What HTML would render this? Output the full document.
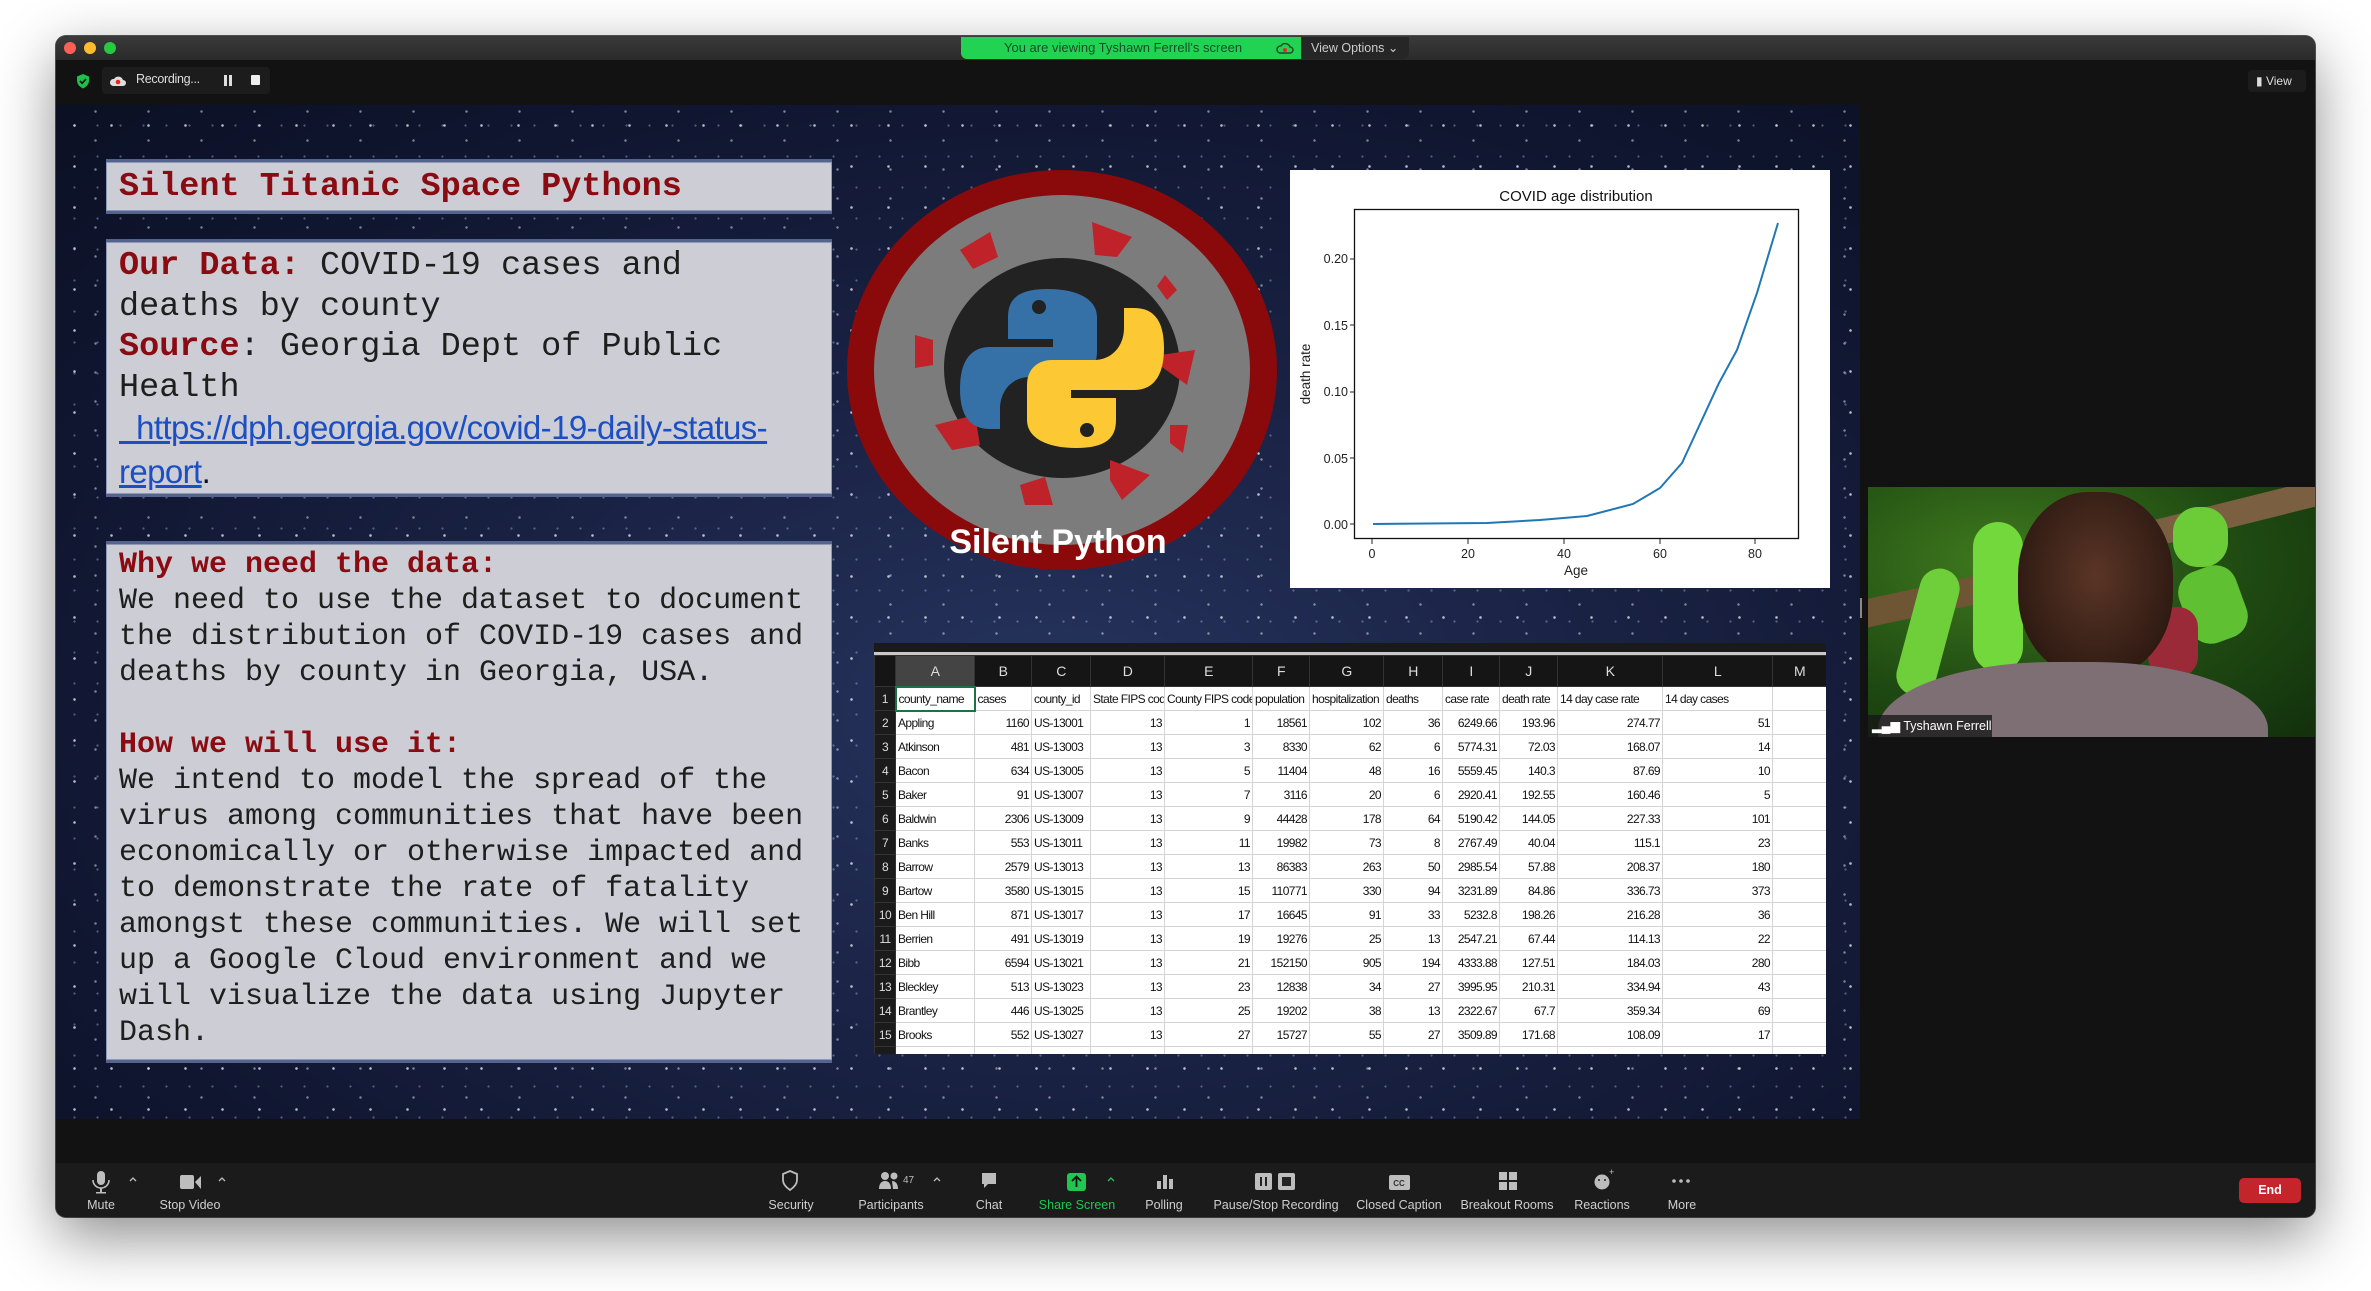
<!DOCTYPE html>
<html><head><meta charset="utf-8">
<style>
*{margin:0;padding:0;box-sizing:border-box}
body{width:2371px;height:1291px;background:#fff;position:relative;overflow:hidden;font-family:"Liberation Sans",sans-serif}
.abs{position:absolute}
#win{left:56px;top:36px;width:2259px;height:1181px;background:#121212;border-radius:10px;overflow:hidden;box-shadow:0 20px 60px rgba(0,0,0,.45),0 0 0 1px #555}
#slide{left:56px;top:105px;width:1804px;height:1014px;
background:
radial-gradient(circle,rgba(255,255,255,.7) 0 1px,transparent 1.6px) 0 0/37px 41px,
radial-gradient(circle,rgba(255,255,255,.45) 0 1px,transparent 1.5px) 13px 21px/53px 29px,
radial-gradient(circle,rgba(200,215,255,.35) 0 .8px,transparent 1.4px) 7px 5px/23px 31px,
radial-gradient(ellipse at 55% 60%,#26345e 0%,#1a2244 40%,#101630 75%,#0b1024 100%);}
.box{position:absolute;background:#cdced5;border-top:3px solid #55648f;border-bottom:3px solid #55648f;box-shadow:inset 0 0 0 1px #8d97b6}
.mono{font-family:"Liberation Mono",monospace;color:#1e1e1e}
.red{color:#8a0b12;font-weight:bold}
.tbl{position:absolute;left:874px;top:643px;width:952px;height:411px;background:#fff;overflow:hidden}
.tbl table{width:952px;border-collapse:collapse;table-layout:fixed;font-family:"Liberation Sans",sans-serif;font-size:12px;letter-spacing:-.6px;color:#111}
.tbl td{height:24px;border:1px solid #d4d4d4;padding:0 2px;white-space:nowrap;overflow:hidden;text-align:right}
.tbl td.l{text-align:left}
.tbl td.rn{background:#1b1b1b;color:#ddd;text-align:center;border-color:#333;padding:0}
.tbl tr.h td{background:#151515;color:#ddd;text-align:center;height:31px;border-color:#333;font-size:14px}
.lab{position:absolute;top:1198px;font-size:12.5px;color:#cfcfcf;transform:translateX(-50%);white-space:nowrap}
</style></head><body>
<div id="win" class="abs"></div>
<div class="abs" style="left:56px;top:36px;width:2259px;height:24px;background:linear-gradient(#3a3a3a,#2a2a2a);border-radius:10px 10px 0 0"></div>
<div class="abs" style="left:64px;top:42px;width:12px;height:12px;border-radius:50%;background:#fe5f57"></div>
<div class="abs" style="left:84px;top:42px;width:12px;height:12px;border-radius:50%;background:#febc2e"></div>
<div class="abs" style="left:104px;top:42px;width:12px;height:12px;border-radius:50%;background:#28c840"></div>
<div class="abs" style="left:961px;top:37px;width:340px;height:22px;background:#22d353;border-radius:0 0 0 6px;font-size:13px;color:#1d4a28;line-height:22px;padding-left:43px">You are viewing Tyshawn Ferrell's screen
<svg class="abs" style="left:315px;top:4px" width="18" height="14"><path d="M4 12h10a3 3 0 0 0 0-6a5 5 0 0 0-9-1a3.5 3.5 0 0 0-1 7z" fill="none" stroke="#1d4a28" stroke-width="1.4"/><circle cx="9" cy="9" r="2" fill="#e23"/></svg></div>
<div class="abs" style="left:1301px;top:37px;width:108px;height:22px;background:#262626;border-radius:0 0 6px 0;font-size:12.5px;color:#ccc;line-height:22px;padding-left:10px">View Options &#8964;</div>
<svg class="abs" style="left:76px;top:73px" width="14" height="16"><path d="M7 1l6 2.5v4c0 4-3 6.5-6 8c-3-1.5-6-4-6-8v-4z" fill="#1fbf4a"/><path d="M4 8l2.2 2.2L10 6" stroke="#111" stroke-width="1.6" fill="none"/></svg>
<div class="abs" style="left:102px;top:67px;width:168px;height:27px;background:#1c1c1c;border-radius:4px"></div>
<svg class="abs" style="left:110px;top:73px" width="16" height="14"><path d="M3 13h10a3 3 0 0 0 0-6a5 5 0 0 0-9-1a3.5 3.5 0 0 0-1 7z" fill="#ddd"/><circle cx="8" cy="9" r="2.3" fill="#e22"/></svg>
<div class="abs" style="left:136px;top:72px;font-size:12.5px;color:#ddd;letter-spacing:-.3px">Recording...</div>
<div class="abs" style="left:224px;top:75px;width:3px;height:11px;background:#ddd"></div>
<div class="abs" style="left:229px;top:75px;width:3px;height:11px;background:#ddd"></div>
<div class="abs" style="left:251px;top:75px;width:9px;height:10px;background:#eee;border-radius:1px"></div>
<div class="abs" style="left:2248px;top:70px;width:58px;height:22px;background:#1c1c1c;border-radius:4px;font-size:12px;color:#ddd;line-height:22px;padding-left:8px">&#9646; View</div>

<div id="slide" class="abs"></div>
<div class="box" style="left:106px;top:159px;width:726px;height:55px"></div>
<div class="abs mono red" style="left:119px;top:168px;font-size:33.5px;line-height:38px">Silent Titanic Space Pythons</div>
<div class="box" style="left:106px;top:239px;width:726px;height:258px"></div>
<div class="abs mono" style="left:119px;top:246px;font-size:33.5px;line-height:40.5px;white-space:pre"><span class="red">Our Data:</span> COVID-19 cases and
deaths by county
<span class="red">Source</span>: Georgia Dept of Public
Health
<span style="font-family:'Liberation Sans',sans-serif;color:#1c4fc4;text-decoration:underline;font-size:33px;letter-spacing:-.6px">  https://dph.georgia.gov/covid-19-daily-status-</span>
<span style="font-family:'Liberation Sans',sans-serif;color:#1c4fc4;font-size:33px;letter-spacing:-.6px"><u>report</u><span style="color:#111">.</span></span></div>
<div class="box" style="left:106px;top:541px;width:726px;height:522px"></div>
<div class="abs mono" style="left:119px;top:547px;font-size:30px;line-height:36px;white-space:pre"><span class="red">Why we need the data:</span>
We need to use the dataset to document
the distribution of COVID-19 cases and
deaths by county in Georgia, USA.

<span class="red">How we will use it:</span>
We intend to model the spread of the
virus among communities that have been
economically or otherwise impacted and
to demonstrate the rate of fatality
amongst these communities. We will set
up a Google Cloud environment and we
will visualize the data using Jupyter
Dash.</div>

<svg class="abs" style="left:0;top:0" width="2371" height="1291">
<ellipse cx="1062" cy="370" rx="215" ry="200" fill="#8a0a0c"/>
<ellipse cx="1062" cy="370" rx="188" ry="175" fill="#7c7c7c"/>
<ellipse cx="1062" cy="368" rx="118" ry="110" fill="#222"/>
<g fill="#c0222a">
<path d="M960 250l30-18l8 25l-25 12z"/><path d="M1092 222l40 15l-15 20l-22-2z"/>
<path d="M1165 275l12 15l-10 10l-10-14z"/><path d="M915 335l18 5l0 25l-18 3z"/>
<path d="M1160 355l35-5l-8 35l-25-18z"/><path d="M935 425l40-10l5 30l-28 5z"/>
<path d="M1170 425l18 0l-5 28l-13-10z"/><path d="M1110 460l40 15l-28 25l-12-20z"/>
<path d="M1020 485l25-8l8 28l-28 0z"/>
</g>
<path d="M1048 289c-30 0-40 10-40 28v22h45v8h-63c-20 0-30 15-30 42s10 40 30 40h10v-20c0-18 12-32 30-32h42c15 0 25-10 25-25v-35c0-18-20-28-49-28z" fill="#3570a7"/>
<circle cx="1039" cy="307" r="7" fill="#222"/>
<path d="M1076 448c30 0 40-10 40-28v-22h-45v-8h63c20 0 30-15 30-42s-10-40-30-40h-10v20c0 18-12 32-30 32h-42c-15 0-25 10-25 25v35c0 18 20 28 49 28z" fill="#fcc934"/>
<circle cx="1087" cy="430" r="7" fill="#222"/>
<text x="1058" y="553" text-anchor="middle" font-family="Liberation Sans Narrow,Liberation Sans,sans-serif" font-size="34" fill="#fff" font-weight="bold">Silent Python</text>

<rect x="1290" y="170" width="540" height="418" fill="#fff"/>
<rect x="1354.5" y="209.5" width="444" height="329" fill="none" stroke="#111" stroke-width="1.3"/>
<text x="1576" y="201" text-anchor="middle" font-size="15" fill="#111">COVID age distribution</text>
<g font-size="12.5" fill="#222" text-anchor="end">
<text x="1348" y="529">0.00</text><text x="1348" y="463">0.05</text><text x="1348" y="396">0.10</text><text x="1348" y="330">0.15</text><text x="1348" y="263">0.20</text></g>
<g stroke="#222"><line x1="1350" x2="1355" y1="524" y2="524"/><line x1="1350" x2="1355" y1="458" y2="458"/><line x1="1350" x2="1355" y1="392" y2="392"/><line x1="1350" x2="1355" y1="325" y2="325"/><line x1="1350" x2="1355" y1="259" y2="259"/>
<line y1="539" y2="544" x1="1372" x2="1372"/><line y1="539" y2="544" x1="1468" x2="1468"/><line y1="539" y2="544" x1="1564" x2="1564"/><line y1="539" y2="544" x1="1660" x2="1660"/><line y1="539" y2="544" x1="1755" x2="1755"/></g>
<g font-size="12.5" fill="#222" text-anchor="middle"><text x="1372" y="558">0</text><text x="1468" y="558">20</text><text x="1564" y="558">40</text><text x="1660" y="558">60</text><text x="1755" y="558">80</text>
<text x="1576" y="575" font-size="13.5">Age</text></g>
<text transform="translate(1310,374) rotate(-90)" text-anchor="middle" font-size="13.5" fill="#222">death rate</text>
<polyline fill="none" stroke="#1f77b4" stroke-width="2" points="1373,524 1487,523 1540,520 1587,516 1633,504 1660,488 1682,463 1719,383 1737,350 1757,293 1778,223"/>
</svg>

<div class="tbl">
<div style="height:12px;background:#1a1a1a;border-bottom:3px solid #c9c9c9"></div>
<table>
<colgroup><col style="width:21px"><col style="width:79px"><col style="width:57px"><col style="width:59px"><col style="width:74px"><col style="width:88px"><col style="width:57px"><col style="width:74px"><col style="width:59px"><col style="width:57px"><col style="width:58px"><col style="width:105px"><col style="width:110px"><col style="width:54px"></colgroup>
<tr class="h"><td></td><td style="background:#444">A</td><td>B</td><td>C</td><td>D</td><td>E</td><td>F</td><td>G</td><td>H</td><td>I</td><td>J</td><td>K</td><td>L</td><td>M</td></tr>
<tr><td class="rn">1</td><td class="l" style="border:2px solid #1e7145">county_name</td><td class="l">cases</td><td class="l">county_id</td><td class="l">State FIPS code</td><td class="l">County FIPS code</td><td class="l">population</td><td class="l">hospitalization</td><td class="l">deaths</td><td class="l">case rate</td><td class="l">death rate</td><td class="l">14 day case rate</td><td class="l">14 day cases</td><td></td></tr>
<tr><td class="rn">2</td><td class="l">Appling</td><td>1160</td><td class="l">US-13001</td><td>13</td><td>1</td><td>18561</td><td>102</td><td>36</td><td>6249.66</td><td>193.96</td><td>274.77</td><td>51</td><td></td></tr>
<tr><td class="rn">3</td><td class="l">Atkinson</td><td>481</td><td class="l">US-13003</td><td>13</td><td>3</td><td>8330</td><td>62</td><td>6</td><td>5774.31</td><td>72.03</td><td>168.07</td><td>14</td><td></td></tr>
<tr><td class="rn">4</td><td class="l">Bacon</td><td>634</td><td class="l">US-13005</td><td>13</td><td>5</td><td>11404</td><td>48</td><td>16</td><td>5559.45</td><td>140.3</td><td>87.69</td><td>10</td><td></td></tr>
<tr><td class="rn">5</td><td class="l">Baker</td><td>91</td><td class="l">US-13007</td><td>13</td><td>7</td><td>3116</td><td>20</td><td>6</td><td>2920.41</td><td>192.55</td><td>160.46</td><td>5</td><td></td></tr>
<tr><td class="rn">6</td><td class="l">Baldwin</td><td>2306</td><td class="l">US-13009</td><td>13</td><td>9</td><td>44428</td><td>178</td><td>64</td><td>5190.42</td><td>144.05</td><td>227.33</td><td>101</td><td></td></tr>
<tr><td class="rn">7</td><td class="l">Banks</td><td>553</td><td class="l">US-13011</td><td>13</td><td>11</td><td>19982</td><td>73</td><td>8</td><td>2767.49</td><td>40.04</td><td>115.1</td><td>23</td><td></td></tr>
<tr><td class="rn">8</td><td class="l">Barrow</td><td>2579</td><td class="l">US-13013</td><td>13</td><td>13</td><td>86383</td><td>263</td><td>50</td><td>2985.54</td><td>57.88</td><td>208.37</td><td>180</td><td></td></tr>
<tr><td class="rn">9</td><td class="l">Bartow</td><td>3580</td><td class="l">US-13015</td><td>13</td><td>15</td><td>110771</td><td>330</td><td>94</td><td>3231.89</td><td>84.86</td><td>336.73</td><td>373</td><td></td></tr>
<tr><td class="rn">10</td><td class="l">Ben Hill</td><td>871</td><td class="l">US-13017</td><td>13</td><td>17</td><td>16645</td><td>91</td><td>33</td><td>5232.8</td><td>198.26</td><td>216.28</td><td>36</td><td></td></tr>
<tr><td class="rn">11</td><td class="l">Berrien</td><td>491</td><td class="l">US-13019</td><td>13</td><td>19</td><td>19276</td><td>25</td><td>13</td><td>2547.21</td><td>67.44</td><td>114.13</td><td>22</td><td></td></tr>
<tr><td class="rn">12</td><td class="l">Bibb</td><td>6594</td><td class="l">US-13021</td><td>13</td><td>21</td><td>152150</td><td>905</td><td>194</td><td>4333.88</td><td>127.51</td><td>184.03</td><td>280</td><td></td></tr>
<tr><td class="rn">13</td><td class="l">Bleckley</td><td>513</td><td class="l">US-13023</td><td>13</td><td>23</td><td>12838</td><td>34</td><td>27</td><td>3995.95</td><td>210.31</td><td>334.94</td><td>43</td><td></td></tr>
<tr><td class="rn">14</td><td class="l">Brantley</td><td>446</td><td class="l">US-13025</td><td>13</td><td>25</td><td>19202</td><td>38</td><td>13</td><td>2322.67</td><td>67.7</td><td>359.34</td><td>69</td><td></td></tr>
<tr><td class="rn">15</td><td class="l">Brooks</td><td>552</td><td class="l">US-13027</td><td>13</td><td>27</td><td>15727</td><td>55</td><td>27</td><td>3509.89</td><td>171.68</td><td>108.09</td><td>17</td><td></td></tr>
<tr><td class="rn">16</td><td class="l">Bryan</td><td>1283</td><td class="l">US-13029</td><td>13</td><td>29</td><td>39627</td><td>88</td><td>14</td><td>3237.7</td><td>35.33</td><td>237.11</td><td>88</td><td></td></tr>
</table></div>

<div class="abs" style="left:1868px;top:487px;width:447px;height:250px;overflow:hidden;background:radial-gradient(ellipse at 30% 30%,#3f7a1e,#1f4a12 55%,#12300c)">
<div class="abs" style="left:-20px;top:95px;width:200px;height:28px;background:#6e5534;transform:rotate(-12deg);border-radius:14px"></div>
<div class="abs" style="left:250px;top:15px;width:220px;height:26px;background:#7a6040;transform:rotate(-14deg);border-radius:13px"></div>
<div class="abs" style="left:40px;top:80px;width:40px;height:130px;background:#6fcf3a;border-radius:20px;transform:rotate(15deg)"></div>
<div class="abs" style="left:105px;top:35px;width:50px;height:150px;background:#72d83c;border-radius:25px"></div>
<div class="abs" style="left:305px;top:20px;width:55px;height:60px;background:#6ccc38;border-radius:25px"></div>
<div class="abs" style="left:315px;top:80px;width:60px;height:75px;background:#5fc032;border-radius:22px;transform:rotate(-20deg)"></div>
<div class="abs" style="left:280px;top:120px;width:50px;height:70px;background:#9a2a38;border-radius:20px"></div>
<div class="abs" style="left:150px;top:5px;width:155px;height:185px;background:radial-gradient(ellipse at 50% 45%,#5a3526,#2e1a12 75%);border-radius:45%"></div>
<div class="abs" style="left:10px;top:175px;width:390px;height:150px;background:#7e6f74;border-radius:45% 45% 0 0"></div>
<div class="abs" style="left:0;top:228px;height:22px;width:124px;background:rgba(20,20,20,.75);color:#fff;font-size:12.5px;line-height:22px;padding-left:4px;white-space:nowrap">&#9602;&#9604;&#9606; Tyshawn Ferrell</div>
</div>
<div class="abs" style="left:1860px;top:598px;width:2px;height:20px;background:#888"></div>

<div class="abs" style="left:56px;top:1163px;width:2259px;height:54px;background:#1b1b1b;border-radius:0 0 10px 10px"></div>
<svg class="abs" style="left:0;top:1165px" width="2371" height="34">
<g fill="#bdbdbd">
<rect x="97" y="6" width="8" height="14" rx="4"/><path d="M93 15a8 8 0 0 0 16 0" fill="none" stroke="#bdbdbd" stroke-width="1.6"/><rect x="100" y="23" width="2" height="4"/><rect x="96" y="27" width="10" height="1.5"/>
<rect x="180" y="10" width="14" height="14" rx="2"/><path d="M195 17l6-6v13z"/>
<path d="M790 6l7 3v6c0 5-4 8-7 10c-3-2-7-5-7-10v-6z" fill="none" stroke="#bdbdbd" stroke-width="1.8"/>
<circle cx="885" cy="11" r="4"/><path d="M879 24c0-6 3-8 6-8s6 2 6 8z"/><circle cx="894" cy="11" r="3.5"/><path d="M892 16c3 0 6 2 6 8h-5z"/>
<path d="M982 8h14v11h-8l-4 4v-4h-2z"/>
<rect x="1163" y="10" width="4" height="14"/><rect x="1157" y="16" width="4" height="8"/><rect x="1169" y="14" width="4" height="10"/>
<rect x="1255" y="8" width="17" height="17" rx="2"/><rect x="1278" y="8" width="17" height="17" rx="2"/>
<rect x="1389" y="10" width="21" height="15" rx="2"/>
<rect x="1499" y="7" width="8" height="8"/><rect x="1509" y="7" width="8" height="8"/><rect x="1499" y="17" width="8" height="8"/><rect x="1509" y="17" width="8" height="8"/>
<circle cx="1602" cy="17" r="7.5"/>
<circle cx="1674" cy="16" r="1.8"/><circle cx="1681" cy="16" r="1.8"/><circle cx="1688" cy="16" r="1.8"/>
</g>
<g fill="#222"><rect x="1260" y="12" width="2" height="9"/><rect x="1265" y="12" width="2" height="9"/><rect x="1282" y="12" width="9" height="9"/>
<circle cx="1599" cy="15" r="1"/><circle cx="1605" cy="15" r="1"/></g>
<text x="1399" y="21" font-size="8" fill="#333" text-anchor="middle" font-weight="bold">CC</text>
<text x="1609" y="10" font-size="9" fill="#bdbdbd">+</text>
<rect x="1067" y="8" width="19" height="18" rx="3" fill="#20c74e"/><path d="M1076.5 22v-9M1072 16l4.5-4.5l4.5 4.5" stroke="#111" stroke-width="1.8" fill="none"/>
<g fill="none" stroke="#bdbdbd" stroke-width="1.3"><path d="M130 16l3-3l3 3"/><path d="M219 16l3-3l3 3"/><path d="M934 16l3-3l3 3"/></g>
<path d="M1108 16l3-3l3 3" fill="none" stroke="#20c74e" stroke-width="1.3"/>
<text x="903" y="18" font-size="10" fill="#bdbdbd">47</text>
</svg>
<div class="lab" style="left:101px">Mute</div>
<div class="lab" style="left:190px">Stop Video</div>
<div class="lab" style="left:791px">Security</div>
<div class="lab" style="left:891px">Participants</div>
<div class="lab" style="left:989px">Chat</div>
<div class="lab" style="left:1077px;color:#20c74e">Share Screen</div>
<div class="lab" style="left:1164px">Polling</div>
<div class="lab" style="left:1276px">Pause/Stop Recording</div>
<div class="lab" style="left:1399px">Closed Caption</div>
<div class="lab" style="left:1507px">Breakout Rooms</div>
<div class="lab" style="left:1602px">Reactions</div>
<div class="lab" style="left:1682px">More</div>
<div class="abs" style="left:2239px;top:1178px;width:62px;height:25px;background:#c4252b;border-radius:5px;color:#fff;font-size:12.5px;font-weight:bold;text-align:center;line-height:25px">End</div>
</body></html>
